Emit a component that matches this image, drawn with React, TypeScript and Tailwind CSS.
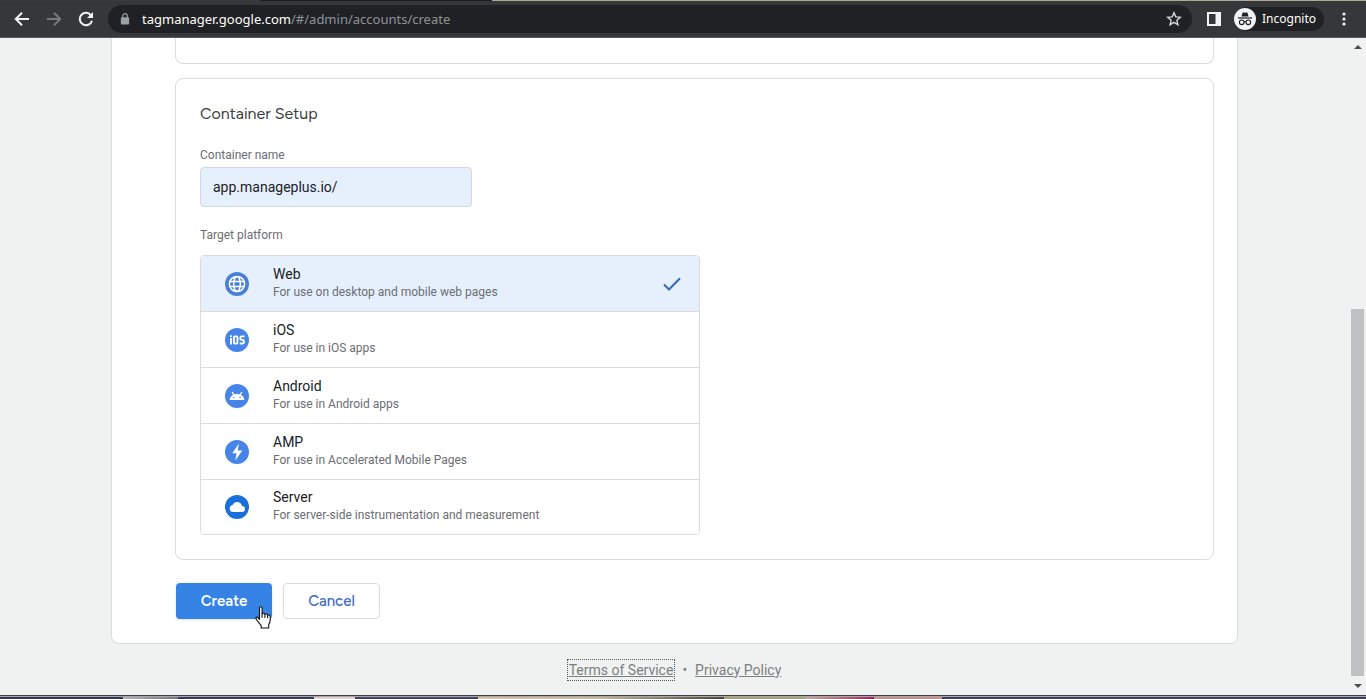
import { useState, type ReactNode } from "react";

type Platform = { id: string; name: string; note: string; icon: ReactNode };

const platforms: Platform[] = [
  {
    id: "web",
    name: "Web",
    note: "For use on desktop and mobile web pages",
    icon: (
      <svg viewBox="0 0 24 24" className="size-6" aria-hidden="true">
        <circle cx="12" cy="12" r="12" fill="#4a80d4" />
        <g fill="none" stroke="#fff" strokeWidth="1.5">
          <circle cx="12" cy="12" r="7.6" />
          <ellipse cx="12" cy="12" rx="3.3" ry="7.6" />
          <path d="M5 9.400h14M5 14.600h14" />
        </g>
      </svg>
    ),
  },
  {
    id: "ios",
    name: "iOS",
    note: "For use in iOS apps",
    icon: (
      <svg viewBox="0 0 24 24" className="size-6" aria-hidden="true">
        <circle cx="12" cy="12" r="12" fill="#4684e8" />
        <g fill="none" stroke="#fff" strokeWidth="1.9">
          <path d="M6 10v6.500M6 7.200v1.900" />
          <rect x="8.900" y="8.400" width="3.600" height="7.100" rx="1" />
          <path d="M19.600 8.400h-2.900q-1.300 0-1.300 1.200v1.100q0 1.200 1.300 1.200h1q1.200 0 1.200 1.200v1.200q0 1.200-1.200 1.200h-3" />
        </g>
      </svg>
    ),
  },
  {
    id: "android",
    name: "Android",
    note: "For use in Android apps",
    icon: (
      <svg viewBox="0 0 24 24" className="size-6" aria-hidden="true">
        <circle cx="12" cy="12" r="12" fill="#4684e8" />
        <path d="M4.600 16c.3-3.600 3.300-6 7.400-6s7.100 2.400 7.400 6z" fill="#fff" />
        <path d="M7.300 8.400l1.900 3M16.700 8.400l-1.900 3" stroke="#fff" strokeWidth="1.200" strokeLinecap="round" />
        <circle cx="8.900" cy="13.400" r=".7" fill="#4684e8" />
        <circle cx="15.100" cy="13.400" r=".7" fill="#4684e8" />
      </svg>
    ),
  },
  {
    id: "amp",
    name: "AMP",
    note: "For use in Accelerated Mobile Pages",
    icon: (
      <svg viewBox="0 0 24 24" className="size-6" aria-hidden="true">
        <circle cx="12" cy="12" r="12" fill="#4684e8" />
        <path d="M13.900 3.600L7.300 13.300h4.200l-1.200 7.200 7-10.100h-4.600z" fill="#fff" />
      </svg>
    ),
  },
  {
    id: "server",
    name: "Server",
    note: "For server-side instrumentation and measurement",
    icon: (
      <svg viewBox="0 0 24 24" className="size-6" aria-hidden="true">
        <circle cx="12" cy="12" r="12" fill="#1a6fdb" />
        <path d="M8 17a3.600 3.600 0 0 1-.5-7.100 5 5 0 0 1 9.400 1.100 3 3 0 0 1 .1 6z" fill="#fff" />
      </svg>
    ),
  },
];

function BrowserBar() {
  return (
    <header className="shrink-0 font-['Noto_Sans','Open_Sans',sans-serif]">
      <div className="flex h-px">
        <div className="w-[19%] bg-[#3a3b3d]" />
        <div className="w-[17%] bg-[#1c1c1e]" />
        <div className="flex-1 bg-[#a9a996]" />
      </div>
      <div className="flex h-9 items-center bg-[#36373a] text-white">
        <button type="button" aria-label="Back" className="ml-2.5 grid size-6 place-items-center">
          <svg viewBox="0 0 16 16" className="size-4" fill="none" stroke="#f1f3f4" strokeWidth="2">
            <path d="M15 8H2.200M8 1.800L1.800 8 8 14.200" />
          </svg>
        </button>
        <button type="button" aria-label="Forward" className="ml-2 grid size-6 place-items-center">
          <svg viewBox="0 0 16 16" className="size-4" fill="none" stroke="#77797c" strokeWidth="2">
            <path d="M1 8h12.800M8 1.800L14.200 8 8 14.200" />
          </svg>
        </button>
        <button type="button" aria-label="Reload" className="ml-2 grid size-6 place-items-center">
          <svg viewBox="0 0 16 16" className="size-4" fill="none" stroke="#f1f3f4" strokeWidth="2">
            <path d="M13.200 4.600A6.200 6.200 0 1 0 14 9.700" />
            <path d="M15 1v6H9z" fill="#f1f3f4" stroke="none" />
          </svg>
        </button>
        <div className="ml-2.5 flex h-7 min-w-0 flex-1 items-center rounded-full bg-[#202124] pr-2.5 pl-3">
          <svg viewBox="0 0 10 13" className="h-3 w-2.5 shrink-0" aria-hidden="true">
            <rect x="0.500" y="4.500" width="9" height="8" rx="1" fill="#9aa0a6" />
            <path d="M2.500 5V3.200a2.500 2.500 0 0 1 5 0V5" fill="none" stroke="#9aa0a6" strokeWidth="1.300" />
          </svg>
          <p className="ml-3 flex-1 truncate pt-0.5 text-[13px] text-[#8f9398]">
            <span className="text-white">tagmanager.google.com</span>/#/admin/accounts/create
          </p>
          <button type="button" aria-label="Bookmark this tab" className="grid size-4 place-items-center">
            <svg viewBox="0 0 16 16" className="size-4" fill="none" stroke="#d5d7da" strokeWidth="1.400">
              <path d="M8 1.800l1.800 4.100 4.500.4-3.400 3 1 4.400L8 11.400l-3.900 2.300 1-4.400-3.400-3 4.500-.4z" />
            </svg>
          </button>
        </div>
        <button type="button" aria-label="Side panel" className="ml-3.5 grid size-4 place-items-center">
          <svg viewBox="0 0 14 14" className="size-3.5">
            <rect width="14" height="14" fill="#f1f3f4" />
            <rect x="2" y="2" width="6.500" height="10" fill="#36373a" />
          </svg>
        </button>
        <button type="button" className="ml-3 flex h-6 items-center rounded-full bg-[#202124] pr-2 text-xs">
          <svg viewBox="0 0 22 22" className="mr-1.5 size-[22px]" aria-hidden="true">
            <circle cx="11" cy="11" r="11" fill="#f1f3f4" />
            <path d="M7.500 8.500L8.600 4.800q.2-.6.900-.4l1.500.4 1.500-.4q.7-.2.9.4l1.100 3.700z" fill="#202124" />
            <path d="M4 10h14" stroke="#202124" strokeWidth="1.200" />
            <g fill="none" stroke="#202124" strokeWidth="1.100">
              <circle cx="7.700" cy="14.300" r="2.300" />
              <circle cx="14.300" cy="14.300" r="2.300" />
              <path d="M10 14q1-.8 2 0" />
            </g>
          </svg>
          Incognito
        </button>
        <button type="button" aria-label="Menu" className="mr-3.5 ml-3 grid size-4 place-items-center">
          <svg viewBox="0 0 4 16" className="h-4 w-1" fill="#f1f3f4">
            <circle cx="2" cy="3" r="1.600" />
            <circle cx="2" cy="8" r="1.600" />
            <circle cx="2" cy="13" r="1.600" />
          </svg>
        </button>
      </div>
      <div className="h-px bg-[#58595b]" />
    </header>
  );
}

function Scrollbar() {
  return (
    <div className="flex w-4 shrink-0 flex-col items-center bg-[#f1f1f1] py-1.5 pr-px" aria-hidden="true">
      <svg viewBox="0 0 8 4" className="mt-px h-1 w-2" fill="#4c4d4f">
        <path d="M4 0l4 4H0z" />
      </svg>
      <div className="grow-[260]" />
      <div className="w-[13px] grow-[367] bg-[#c0c1c2]" />
      <svg viewBox="0 0 8 4" className="mt-2 mb-px h-1 w-2" fill="#4c4d4f">
        <path d="M0 0h8L4 4z" />
      </svg>
    </div>
  );
}

function PointerHand() {
  return (
    <svg
      viewBox="0 0 17 23"
      className="pointer-events-none absolute right-0 -bottom-2.5 h-[23px] w-[17px]"
      aria-hidden="true"
    >
      <path
        d="M4.500 13.500V2.200q0-1.400 1.300-1.400t1.300 1.400v5.300q2.300-.9 2.800.7 2.200-.7 2.700.9 2.400-.6 2.600 1.200V14q0 2.500-1.500 4.500V22H6.200v-2.300L2 14.300q-1.600-2.200-.8-2.900 1-.8 2.200.7z"
        fill="#fff"
        stroke="#111"
        strokeWidth="1.100"
        strokeLinejoin="round"
      />
      <path d="M7.100 7.500v4.200M9.900 8.200v3.700M12.600 9.100v3.200" stroke="#111" strokeWidth="1.100" />
    </svg>
  );
}

/* Sliver of the desktop taskbar below the browser window. */
function Taskbar() {
  return (
    <div className="shrink-0 border-t border-[#3e3f42]" aria-hidden="true">
      <div className="h-px bg-[#a5a6ae]" />
      <div className="flex h-0.5">
        <div className="w-[9%] bg-[#34364a]" />
        <div className="w-[4%] bg-linear-to-r from-[#b5b5b5] to-[#77777c]" />
        <div className="w-[10%] bg-[#3a3c52]" />
        <div className="w-[3%] bg-[#e2d3d2]" />
        <div className="w-[9%] bg-[#45465a]" />
        <div className="w-[18%] bg-linear-to-r from-[#d9c1a5] via-[#c3b896] to-[#4a4a3d]" />
        <div className="w-[6%] bg-[#a3a377]" />
        <div className="w-[5%] bg-linear-to-r from-[#c3a79c] to-[#a31c5b]" />
        <div className="w-[5%] bg-[#c58f8f]" />
        <div className="flex-1 bg-[#3d4058]" />
      </div>
    </div>
  );
}

export default function App() {
  const [selected, setSelected] = useState("web");
  const [name, setName] = useState("app.manageplus.io/");

  return (
    <div className="flex min-h-screen flex-col bg-[#f0f2f2] font-['Roboto',sans-serif]">
      <BrowserBar />
      <div className="flex flex-1">
        <div className="flex min-w-0 flex-1 flex-col pr-28 pl-[111px]">
          <main className="rounded-b-lg border border-t-0 border-[#dadcdc] bg-white pr-[23px] pb-6 pl-[63px]">
            <div className="h-[26px] rounded-b-lg border border-t-0 border-[#dadcdc]" />
            <form onSubmit={(e) => e.preventDefault()}>
              <section className="mt-3.5 rounded-lg border border-[#dadcdc] p-6">
                <h2 className="pt-px font-['Figtree','Lato',sans-serif] text-base leading-5 text-[#3c4043]">Container Setup</h2>
                <label htmlFor="container-name" className="mt-[23px] block text-xs leading-4 text-[#6b6e72]">
                  Container name
                </label>
                <input
                  id="container-name"
                  value={name}
                  onChange={(e) => setName(e.target.value)}
                  className="mt-1 block h-10 w-68 rounded border border-[#cfd8e3] bg-[#e6f0fd] px-3 text-sm text-[#202124] outline-none"
                />
                <fieldset className="mt-5">
                  <legend className="text-xs leading-4 text-[#6b6e72]">Target platform</legend>
                  <div className="mt-3 max-w-[500px] divide-y divide-[#dadcdc] overflow-hidden rounded border border-[#dadcdc]">
                    {platforms.map((p) => (
                      <label
                        key={p.id}
                        className={
                          "flex h-14 cursor-pointer items-center pr-[18px] pl-6 last:h-[54px] " +
                          (selected === p.id ? "bg-[#e6f0fd]" : "bg-white")
                        }
                      >
                        <input
                          type="radio"
                          name="platform"
                          value={p.id}
                          checked={selected === p.id}
                          onChange={() => setSelected(p.id)}
                          className="sr-only"
                        />
                        {p.icon}
                        <span className="ml-6 flex-1 pb-0.5">
                          <span className="block text-sm leading-[18px] text-[#202124]">{p.name}</span>
                          <span className="block text-xs leading-[18px] text-[#6b6e72]">{p.note}</span>
                        </span>
                        {selected === p.id && (
                          <svg viewBox="0 0 18 14" className="h-3.5 w-[18px]" fill="none" stroke="#3568b5" strokeWidth="2" aria-hidden="true">
                            <path d="M1 7.500l5 5L17 1.200" />
                          </svg>
                        )}
                      </label>
                    ))}
                  </div>
                </fieldset>
              </section>
              <div className="mt-[23px] flex gap-[11px] pl-px font-['Figtree','Lato',sans-serif] text-[15px]">
                <div className="relative">
                  <button type="submit" className="h-9 w-24 rounded bg-[#3683e6] font-semibold text-white shadow-sm">
                    Create
                  </button>
                  <PointerHand />
                </div>
                <button type="button" className="h-9 w-[97px] rounded border border-[#dadcdc] bg-white font-medium text-[#3f6cc0]">
                  Cancel
                </button>
              </div>
            </form>
          </main>
          <footer className="flex flex-1 items-center justify-center gap-2 text-sm text-[#7b7f82]">
            <a href="#terms" className="px-px underline outline-1 outline-dotted outline-[#555]">Terms of Service</a>
            <span>•</span>
            <a href="#privacy" className="underline">Privacy Policy</a>
          </footer>
        </div>
        <Scrollbar />
      </div>
      <Taskbar />
    </div>
  );
}
